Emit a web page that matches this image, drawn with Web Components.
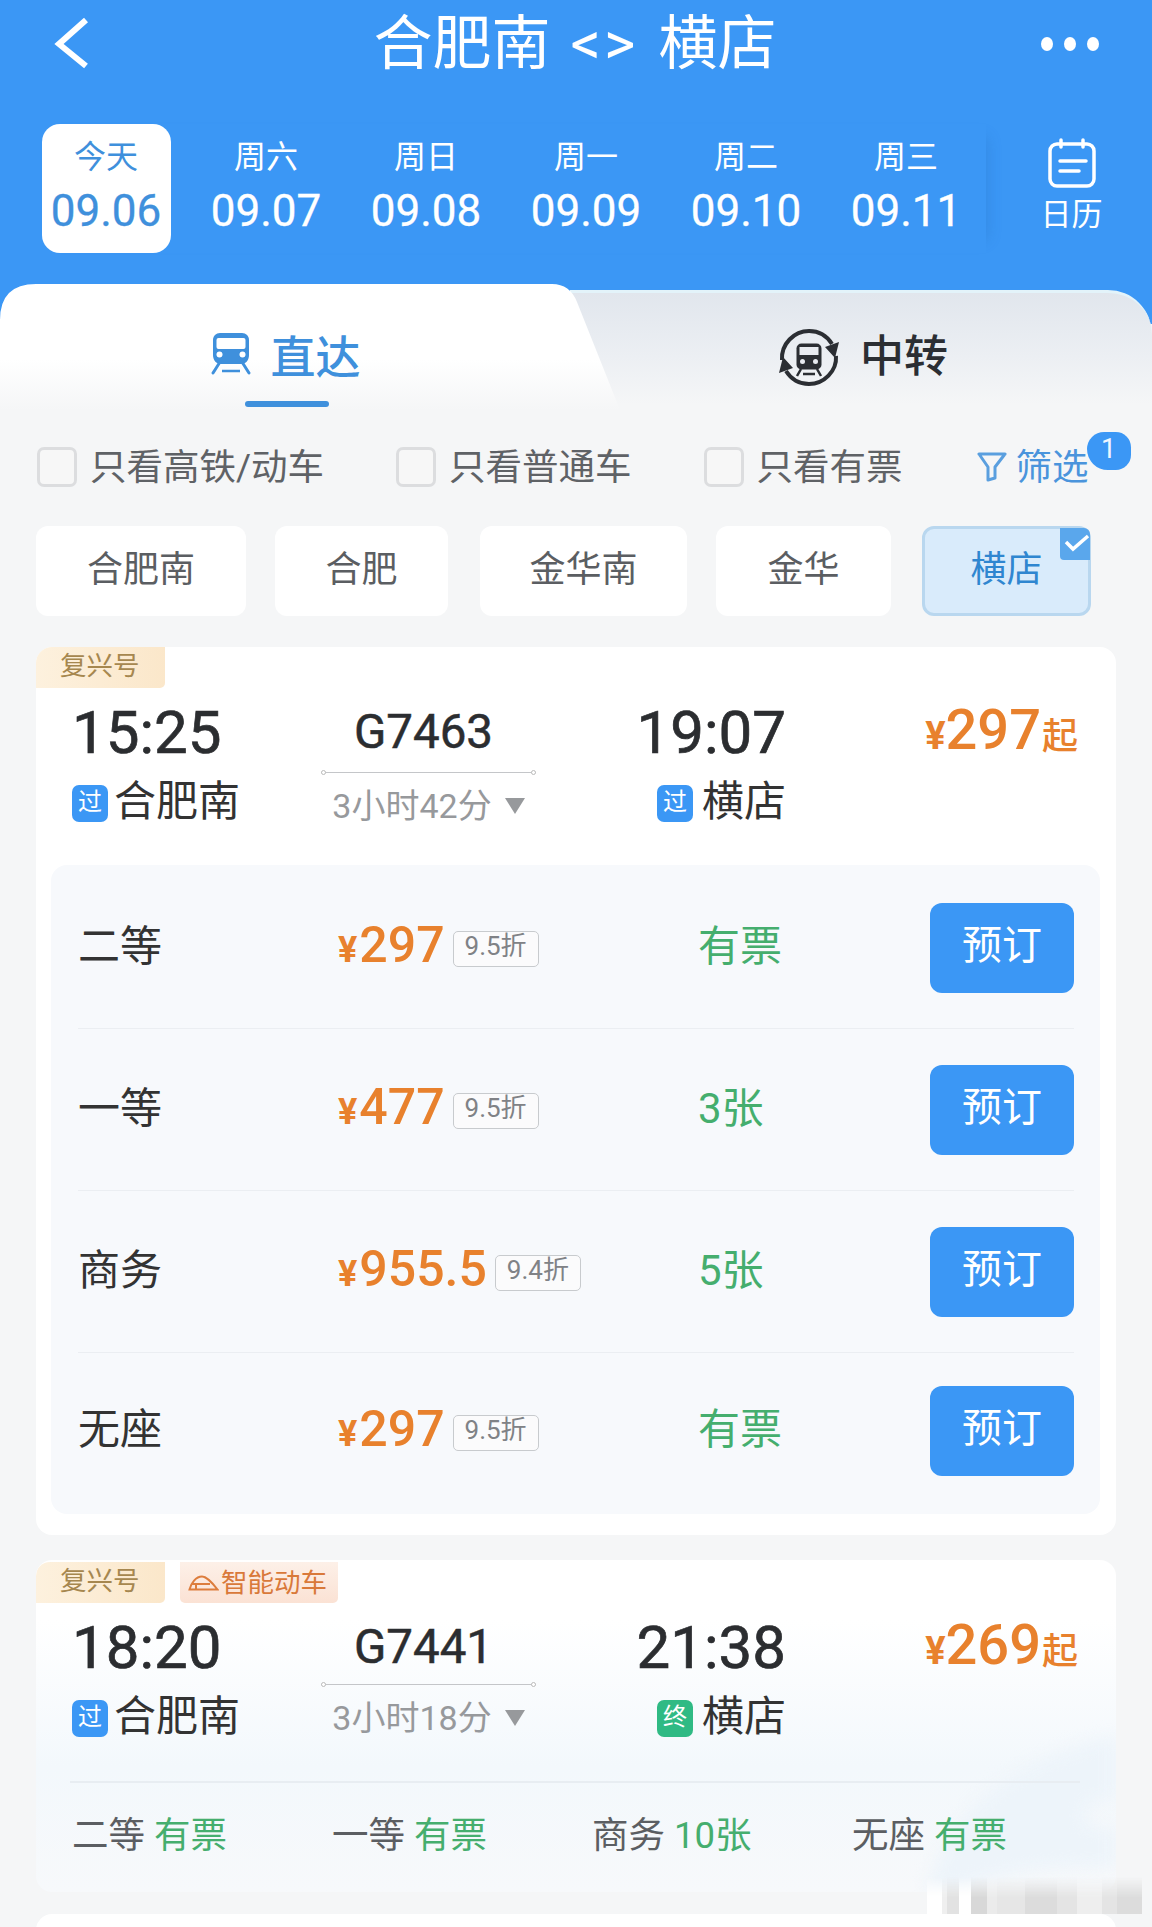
<!DOCTYPE html>
<html lang="zh">
<head>
<meta charset="utf-8">
<title>合肥南 - 横店</title>
<style>
  html, body { margin: 0; padding: 0; }
  body {
    width: 1152px;
    height: 1927px;
    overflow: hidden;
    background: #f5f6f7;
    font-family: Roboto, "Noto Sans CJK SC", sans-serif;
    color: #333;
  }
</style>
</head>
<body>
  <app-header from="合肥南" to="横店">
    <date-item week="今天" date="09.06" active></date-item>
    <date-item week="周六" date="09.07"></date-item>
    <date-item week="周日" date="09.08"></date-item>
    <date-item week="周一" date="09.09"></date-item>
    <date-item week="周二" date="09.10"></date-item>
    <date-item week="周三" date="09.11"></date-item>
  </app-header>
  <route-tabs></route-tabs>
  <filter-bar></filter-bar>
  <station-chips></station-chips>

  <train-card depart="15:25" arrive="19:07" code="G7463" duration="3小时42分" price="297" from="合肥南" to="横店" to-type="过">
    <seat-panel>
      <seat-row name="二等" price="297" off="9.5折" left="有票"></seat-row>
      <seat-row name="一等" price="477" off="9.5折" left="3张"></seat-row>
      <seat-row name="商务" price="955.5" off="9.4折" left="5张"></seat-row>
      <seat-row name="无座" price="297" off="9.5折" left="有票" last></seat-row>
    </seat-panel>
  </train-card>

  <train-card class="second" smart depart="18:20" arrive="21:38" code="G7441" duration="3小时18分" price="269" from="合肥南" to="横店" to-type="终">
    <seat-summary>
      <span>二等 <b>有票</b></span>
      <span>一等 <b>有票</b></span>
      <span>商务 <b>10张</b></span>
      <span>无座 <b>有票</b></span>
    </seat-summary>
  </train-card>
  <card-stub></card-stub>
  <water-mark></water-mark>

<script>
function shadow(el, html) {
  el.attachShadow({ mode: 'open' }).innerHTML = html;
}

class AppHeader extends HTMLElement {
  connectedCallback() {
    shadow(this, `
      <style>
        :host { display: block; height: 284px; background: #3b97f5; color: #fff; }
        .top { display: flex; align-items: center; justify-content: space-between; height: 88px; padding: 0 52px 0 52px; }
        .title { display: flex; align-items: center; gap: 20px; margin-left: 18px; font-size: 59px; line-height: 88px; }
        .title span { font-size: 60px; letter-spacing: 3px; }
        .strip { display: flex; padding: 36px 0 0 26px; }
        .dates { display: flex; width: 960px; box-shadow: 14px 0 14px -14px rgba(30, 100, 180, .3); }
        .cal { flex: 1; display: flex; flex-direction: column; align-items: center; padding: 14px 0 0 5px; font-size: 31px; line-height: 46px; }
        .cal svg { display: block; margin-bottom: 4px; }
      </style>
      <div class="top">
        <svg width="40" height="56" viewBox="0 0 40 56"><path d="M34 4 L7 28 L34 50" fill="none" stroke="#fff" stroke-width="6"/></svg>
        <div class="title">${this.getAttribute('from')}<span>&lt;&gt;</span>${this.getAttribute('to')}</div>
        <svg width="60" height="16" viewBox="0 0 60 16" fill="#fff"><ellipse cx="7" cy="8" rx="6" ry="7"/><ellipse cx="30" cy="8" rx="6" ry="7"/><ellipse cx="53" cy="8" rx="6" ry="7"/></svg>
      </div>
      <div class="strip">
        <div class="dates"><slot></slot></div>
        <div class="cal">
          <svg width="48" height="50" viewBox="0 0 48 50" fill="none" stroke="#fff" stroke-width="3.500" stroke-linecap="round">
            <rect x="2" y="6" width="44" height="42" rx="7"/>
            <path d="M13 2v7M35 2v7M12 23h26M12 33h19"/>
          </svg>
          <span>日历</span>
        </div>
      </div>
    `);
  }
}

class DateItem extends HTMLElement {
  connectedCallback() {
    shadow(this, `
      <style>
        :host { display: flex; justify-content: center; width: 160px; }
        .box { width: 129px; height: 129px; border-radius: 18px; text-align: center; display: flex; flex-direction: column; align-items: center; }
        :host([active]) .box { background: #fff; color: #3f90dc; }
        .week { font-size: 32px; line-height: 40px; margin-top: 13px; }
        .date { font-size: 44px; line-height: 52px; margin-top: 8px; -webkit-text-stroke: .3px currentColor; }
      </style>
      <div class="box">
        <div class="week">${this.getAttribute('week')}</div>
        <div class="date">${this.getAttribute('date')}</div>
      </div>
    `);
  }
}

class RouteTabs extends HTMLElement {
  connectedCallback() {
    shadow(this, `
      <style>
        :host { display: flex; height: 126px; background: linear-gradient(#3b97f5 0 40px, #f5f6f7 40px); }
        .on {
          position: relative; z-index: 1; width: 620px; flex: none; height: 126px;
          clip-path: path("M0 126 V36 Q0 0 36 0 H552 Q570 0 577 18 L620 126 Z");
          background: linear-gradient(#fff 60%, #f5f6f7 100%);
          display: flex; flex-direction: column; align-items: center; box-sizing: border-box; padding: 49px 48px 0 0;
        }
        .label { display: flex; align-items: center; gap: 19px; height: 42px; font-size: 45px; color: #3f90dc; font-weight: 500; }
        .bar { width: 84px; height: 6px; border-radius: 3px; background: #3f90dc; margin-top: 26px; margin-left: 2px; }
        .off {
          flex: 1; margin: 6px 0 0 -50px; border-top: 3px solid #e3f3fa; border-radius: 0 44px 0 0;
          background: linear-gradient(#e1e6ed, #eceff3 55%, #f5f6f7 95%);
          display: flex; align-items: flex-start; padding: 35px 0 0 208px; gap: 20px; font-size: 44px; line-height: 58px; font-weight: 500; color: #2b2e33;
        }
      </style>
      <div class="on">
        <div class="label">
          <svg width="40" height="42" viewBox="0 0 40 42">
            <path fill="#3f90dc" d="M9 0h22c4 0 7 3 7 7v15c0 5-3 9-8 9H10c-5 0-8-4-8-9V7c0-4 3-7 7-7z"/>
            <rect x="5.500" y="5" width="29" height="11" rx="2" fill="#fff"/>
            <circle cx="8.500" cy="21.500" r="3" fill="#fff"/><circle cx="31.500" cy="21.500" r="3" fill="#fff"/>
            <path fill="none" stroke="#3f90dc" stroke-width="3" stroke-linecap="round" d="M9 29 2 40M31 29l7 11"/>
            <path fill="none" stroke="#3f90dc" stroke-width="2.500" d="M11 38h18"/>
          </svg>
          <span>直达</span>
        </div>
        <div class="bar"></div>
      </div>
      <div class="off">
        <svg width="62" height="59" viewBox="0 0 62 59">
          <path fill="none" stroke="#2b2e33" stroke-width="4" d="M4 32C3 16 16 3 31 3c10 0 18 5 23 13M58 28c1 15-12 28-27 28-10 0-18-5-23-13"/>
          <path fill="#2b2e33" d="M61 14 57 30 47 19zM1 45l4-16 10 11z"/>
          <rect x="18.500" y="15.500" width="25" height="26" rx="5" fill="#2b2e33"/>
          <rect x="21.500" y="19" width="19" height="8" fill="#e8ebf0"/>
          <circle cx="24.500" cy="33.500" r="2.500" fill="#e8ebf0"/><circle cx="37.500" cy="33.500" r="2.500" fill="#e8ebf0"/>
          <path fill="none" stroke="#2b2e33" stroke-width="2.500" d="M23 41l-4 7M39 41l4 7M25 46h12"/>
        </svg>
        <span>中转</span>
      </div>
    `);
  }
}

class FilterBar extends HTMLElement {
  connectedCallback() {
    const box = (t) => `<div class="opt"><i></i><span>${t}</span></div>`;
    shadow(this, `
      <style>
        :host { display: flex; align-items: center; height: 40px; padding: 37px 0 0 37px; font-size: 36.500px; color: #5f6266; gap: 72px; }
        .opt { display: flex; align-items: center; gap: 13px; white-space: nowrap; }
        .opt span, .filter span { padding-bottom: 6px; }
        i { display: block; box-sizing: border-box; width: 40px; height: 40px; background: #f7f7f7; border: 3px solid #dcdddf; border-radius: 7px; }
        .filter { position: relative; display: flex; align-items: center; gap: 9px; margin-left: 2px; color: #4a94dc; }
        .badge { position: absolute; left: 110px; top: -6px; width: 44px; height: 38px; border-radius: 18px 16px 16px 22px; background: #3b97f5; color: #eef6ff; font-size: 27px; line-height: 34px; text-align: center; }
      </style>
      ${box('只看高铁/动车')}${box('只看普通车')}${box('只看有票')}
      <div class="filter">
        <svg width="30" height="32" viewBox="0 0 30 32" fill="none" stroke="#5a9fdf" stroke-width="3" stroke-linejoin="round" stroke-linecap="round"><path d="M2 3h26M2 3l9 13v13M28 3l-10 13v11l-7 2"/></svg>
        <span>筛选</span>
        <div class="badge">1</div>
      </div>
    `);
  }
}

class StationChips extends HTMLElement {
  connectedCallback() {
    const chip = (t, w, m) => `<div class="chip" style="width:${w}px;margin-right:${m}px">${t}</div>`;
    shadow(this, `
      <style>
        :host { display: flex; padding: 39px 0 31px 36px; }
        .chip { height: 90px; background: #fff; border-radius: 12px; font-size: 36px; line-height: 88px; text-align: center; color: #5b5e62; }
        .sel { position: relative; box-sizing: border-box; width: 169px; height: 90px; background: #d9ebfb; border: 3px solid #b9d7ef; border-radius: 12px; font-size: 36px; line-height: 82px; text-align: center; color: #2f86d0; }
        .sel svg { position: absolute; right: -2px; top: -1px; }
      </style>
      ${chip('合肥南', 210, 29)}${chip('合肥', 173, 32)}${chip('金华南', 207, 29)}${chip('金华', 175, 31)}
      <div class="sel">横店
        <svg width="30" height="32" viewBox="0 0 30 32"><path d="M0 0h24a6 6 0 0 1 6 6v26H4a4 4 0 0 1-4-4z" fill="#5aa7ec"/><path d="M6 14l7 7L28 8" fill="none" stroke="#fff" stroke-width="3.500"/></svg>
      </div>
    `);
  }
}

class TrainCard extends HTMLElement {
  connectedCallback() {
    const a = (n) => this.getAttribute(n);
    const toClass = a('to-type') === '终' ? 'end' : '';
    const smart = this.hasAttribute('smart') ? `
      <div class="tag smart">
        <svg width="31" height="16" viewBox="0 0 31 16" fill="none" stroke="#dd7d3d" stroke-width="2"><path d="M1.500 14.500C3 8 8 1.500 14 1.500c4 0 11 7 15.500 13z"/><path d="M4 9h18M8 14V9" /></svg>智能动车
      </div>` : '';
    const second = this.classList.contains('second');
    shadow(this, `
      <style>
        :host { display: block; position: relative; overflow: hidden; margin: 0 36px; background: #fff; border-radius: 16px; }
        :host(.second) { margin-top: 25px; height: 332px; padding-top: 2px; box-sizing: border-box; background: linear-gradient(#fff 0, #fff 60px, #f3f8fc 62%, #f7f9fb 100%); }
        .tags { display: flex; gap: 15px; height: 41px; }
        .tag { box-sizing: border-box; height: 41px; font-size: 26.500px; line-height: 38px; }
        .fx { width: 129px; padding-left: 24px; background: linear-gradient(90deg, #fdf1de, #fbe7ca); color: #a6874f; border-radius: 14px 0 5px 0; }
        .smart { width: 158px; padding-left: 8px; background: linear-gradient(#fdf0e8, #fbe2d4); color: #d9793a; border-radius: 0 0 5px 5px; display: flex; align-items: center; gap: 2px; }
        .trip { display: grid; grid-template-columns: 249px 215px 250px 292px; padding-left: 36px; position: relative; }
        .time { height: 84px; font-size: 60px; line-height: 90px; color: #2b2d30; -webkit-text-stroke: .7px #2b2d30; }
        .st { box-sizing: border-box; display: flex; align-items: center; gap: 6px; height: 56px; padding-bottom: 5px; font-size: 42px; color: #333; }
        .arr .st { gap: 9px; }
        .st u { display: block; text-decoration: none; width: 36px; height: 37px; margin-top: 12px; border-radius: 7px; background: #3b97f5; color: #fff; font-size: 24px; line-height: 35px; text-align: center; }
        .st u.end { background: #2fba84; }
        .arr { display: flex; flex-direction: column; align-items: flex-end; }
        .mid { display: flex; flex-direction: column; align-items: center; }
        .code { height: 84px; margin-right: 10px; font-size: 47.500px; line-height: 88px; color: #2b2d30; -webkit-text-stroke: .5px #2b2d30; }
        :host(.second) .code { height: 81px; }
        .line { align-self: stretch; position: relative; height: 1px; background: #c4c6c9; margin-bottom: 13px; }
        .line::before, .line::after { content: ""; position: absolute; top: -2px; width: 5px; height: 5px; box-sizing: border-box; border: 1px solid #bbb; border-radius: 50%; background: #fff; }
        .line::before { left: 0; } .line::after { right: 0; }
        .dur { display: flex; align-items: center; gap: 13px; font-size: 34px; line-height: 40px; color: #97999c; }
        .dur svg { flex: none; }
        .price { height: 84px; text-align: right; color: #e8812d; line-height: 85px; white-space: nowrap; }
        .price small { font-size: 38px; font-weight: 700; } .price b { font-size: 56px; font-weight: 500; } .price em { font-style: normal; font-size: 36px; margin-left: 1px; font-weight: 500; }
        .wave { position: absolute; right: 0; bottom: 0; filter: blur(8px); }
      </style>
      ${second ? `<svg class="wave" width="190" height="160" viewBox="0 0 190 160"><path d="M0 160C20 90 70 30 190 5v60c-30 0-40 25-20 30 10 3 20 0 20 0v40c-70 0-120 5-160 25z" fill="#edf4fa"/></svg>` : ''}
      <div class="tags"><div class="tag fx">复兴号</div>${smart}</div>
      <div class="trip">
        <div><div class="time">${a('depart')}</div><div class="st"><u>过</u>${a('from')}</div></div>
        <div class="mid">
          <div class="code">${a('code')}</div>
          <div class="line"></div>
          <div class="dur">${a('duration')}<svg width="20" height="16" viewBox="0 0 20 16"><path d="M0 0h20L10 16z" fill="#97999c"/></svg></div>
        </div>
        <div class="arr"><div class="time">${a('arrive')}</div><div class="st"><u class="${toClass}">${a('to-type')}</u>${a('to')}</div></div>
        <div class="price"><small>¥</small><b>${a('price')}</b><em>起</em></div>
      </div>
      <slot></slot>
    `);
  }
}

class SeatPanel extends HTMLElement {
  connectedCallback() {
    shadow(this, `
      <style>
        :host { display: block; margin: 37px 16px 21px 15px; padding: 2px 26px 5px 27px; background: #f7f9fc; border-radius: 16px; }
      </style>
      <slot></slot>
    `);
  }
}

class SeatRow extends HTMLElement {
  connectedCallback() {
    const a = (n) => this.getAttribute(n);
    shadow(this, `
      <style>
        :host { display: flex; align-items: center; height: 161px; border-bottom: 1px solid #ebeef2; }
        :host([last]) { border-bottom: 0; height: 156px; }
        .name, .left { padding-bottom: 11px; }
        .fare { padding-bottom: 5px; }
        .name { width: 260px; font-size: 42px; color: #333; }
        .fare { width: 360px; display: flex; align-items: center; gap: 8px; color: #e8812d; }
        .num { font-size: 50px; font-weight: 500; }
        .num small { font-size: 36px; font-weight: 700; margin-right: 2px; }
        .off { box-sizing: border-box; width: 86px; height: 36px; margin-top: 8px; border: 1px solid #c8cbce; border-radius: 5px; background: #fbfbfc; color: #808286; font-size: 26px; line-height: 28px; text-align: center; font-weight: 400; }
        .left { flex: 1; font-size: 42px; color: #45ae6e; }
        .btn { width: 144px; height: 90px; border-radius: 12px; background: #3b97f5; color: #fff; font-size: 40px; line-height: 86px; text-align: center; }
      </style>
      <div class="name">${a('name')}</div>
      <div class="fare"><div class="num"><small>¥</small>${a('price')}</div><div class="off">${a('off')}</div></div>
      <div class="left">${a('left')}</div>
      <div class="btn">预订</div>
    `);
  }
}

class SeatSummary extends HTMLElement {
  connectedCallback() {
    shadow(this, `
      <style>
        :host { display: grid; grid-template-columns: repeat(4, 260px); margin: 38px 36px 0 34px; padding-top: 30px; border-top: 2px solid #e8edf2; font-size: 36.500px; line-height: 46px; color: #5b5e62; position: relative; }
        ::slotted(span) { white-space: nowrap; padding-left: 2px; }
      </style>
      <slot></slot>
    `);
    // colour of the <b> lives in the light DOM so it is set here
    this.querySelectorAll('b').forEach((b) => {
      b.style.fontWeight = '400';
      b.style.color = '#45ae6e';
    });
  }
}

class CardStub extends HTMLElement {
  connectedCallback() {
    shadow(this, `<style>:host { display: block; height: 40px; margin: 22px 36px 0; background: #fff; border-radius: 16px 16px 0 0; }</style>`);
  }
}

// blurred site watermark on top of the corner
class WaterMark extends HTMLElement {
  connectedCallback() {
    shadow(this, `
      <style>
        :host {
          position: absolute; left: 927px; top: 1877px; width: 215px; height: 37px;
          background: linear-gradient(90deg,
            #fff 0 15px, #efefef 15px 20px, #e2e2e2 20px 32px, #fff 32px 44px, #d8d8d8 44px 60px,
            #ebebeb 60px 70px, #e6e6e6 70px 98px, #dcdcdc 98px 130px, #e4e4e4 130px 150px,
            #eeeeee 150px 175px, #e4e4e4 175px 190px, #dcdcdc 190px 215px);
          -webkit-mask-image: linear-gradient(transparent, #000 55%);
          mask-image: linear-gradient(transparent, #000 55%);
        }
      </style>
    `);
  }
}

customElements.define('app-header', AppHeader);
customElements.define('date-item', DateItem);
customElements.define('route-tabs', RouteTabs);
customElements.define('filter-bar', FilterBar);
customElements.define('station-chips', StationChips);
customElements.define('train-card', TrainCard);
customElements.define('seat-panel', SeatPanel);
customElements.define('seat-row', SeatRow);
customElements.define('seat-summary', SeatSummary);
customElements.define('card-stub', CardStub);
customElements.define('water-mark', WaterMark);
</script>
</body>
</html>
